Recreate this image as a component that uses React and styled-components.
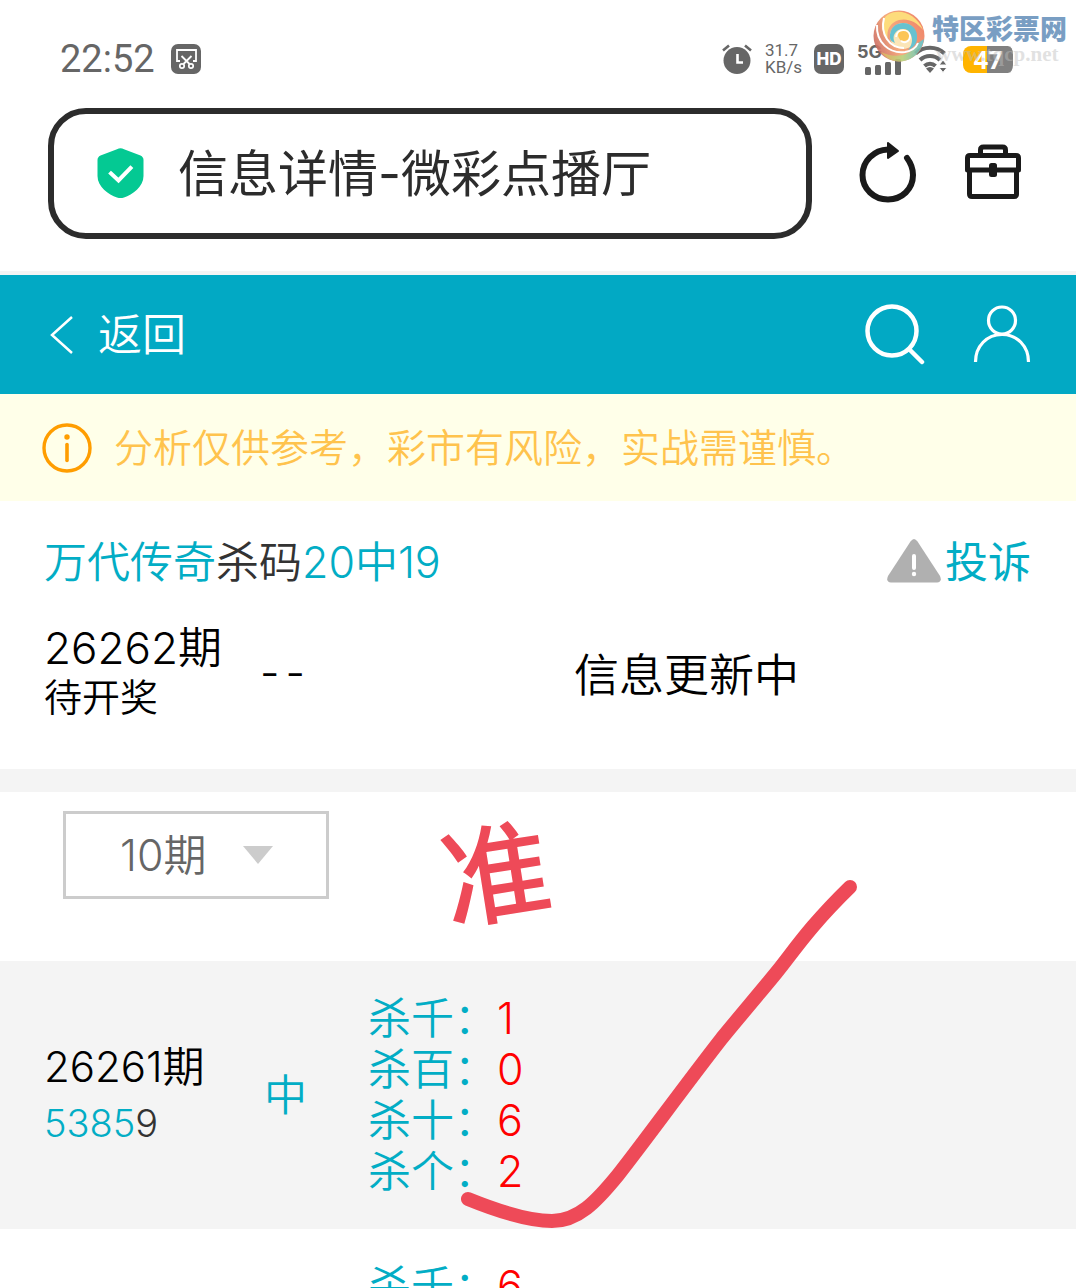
import React, { useState } from 'react';
import styled, { createGlobalStyle } from 'styled-components';

const history = [
  {
    issue: '26261期',
    hitCode: '5385',
    restCode: '9',
    result: '中',
    picks: [
      { label: '杀千', value: 1 },
      { label: '杀百', value: 0 },
      { label: '杀十', value: 6 },
      { label: '杀个', value: 2 },
    ],
  },
  {
    issue: '',
    hitCode: '',
    restCode: '',
    result: '',
    picks: [{ label: '杀千', value: 6 }],
  },
];

const ScissorsIcon = () => (
  <svg width="30" height="30" viewBox="0 0 30 30" fill="none">
    <rect width="30" height="30" rx="7" fill="#666" />
    <path d="M9 17H6V6h19v11h-3" stroke="#fff" strokeWidth="1.8" />
    <path d="M10.5 12l8 8M20.5 12l-8 8" stroke="#fff" strokeWidth="1.8" />
    <circle cx="11" cy="22" r="2.2" stroke="#fff" strokeWidth="1.7" />
    <circle cx="20" cy="22" r="2.2" stroke="#fff" strokeWidth="1.7" />
  </svg>
);

const AlarmIcon = () => (
  <svg width="30" height="30" viewBox="0 0 30 30" fill="none">
    <circle cx="15" cy="16.5" r="13.5" fill="#666" />
    <path d="M1 6.5l6-5M29 6.5l-6-5" stroke="#666" strokeWidth="2.6" />
    <path d="M15.5 10v8.5H21" stroke="#fff" strokeWidth="2.6" />
  </svg>
);

const SignalIcon = () => (
  <svg width="36" height="16" viewBox="0 0 36 16" fill="#666">
    <rect x="0" y="8" width="6" height="8" rx="1.5" />
    <rect x="10" y="6" width="6" height="10" rx="1.5" />
    <rect x="20" y="3" width="6" height="13" rx="1.5" />
    <rect x="30" y="0" width="6" height="16" rx="1.5" />
  </svg>
);

const WifiIcon = () => (
  <svg width="36" height="30" viewBox="0 0 36 30" fill="none">
    <g stroke="#666" strokeWidth="4">
      <path d="M1.5 9.5a21 21 0 0 1 29 0" />
      <path d="M6 16a14.5 14.5 0 0 1 20 0" />
      <path d="M10.5 22a8 8 0 0 1 11 0" />
    </g>
    <path d="M12 24.5a6 6 0 0 1 8 0L16 29z" fill="#666" />
    <path d="M25 21l4-5 4 5zM25 23.5l4 5 4-5z" fill="#666" stroke="#fff" strokeWidth="1" />
  </svg>
);

const ShieldIcon = () => (
  <svg width="47" height="52" viewBox="0 0 47 52" fill="none">
    <path
      d="M20 1.200Q23.500-.500 27 1.200L43.500 7.500Q46.500 9 46.500 12v16c0 11-11 18.500-19.500 21.500q-3.500 1-7 0C11.500 46.500.500 39 .500 28V12q0-3 3-4.500z"
      fill="#04c993"
    />
    <path d="M14 25.5l7.500 7L33.500 20" stroke="#fff" strokeWidth="4" strokeLinecap="square" />
  </svg>
);

const RefreshIcon = () => (
  <svg width="58" height="66" viewBox="0 0 58 66" fill="none">
    <path d="M29 8.5C15 9 3.5 20 3.5 34S15 58.5 29 58.500 54 48 54 34c0-7-3-13-6-17" stroke="#1a1a1a" strokeWidth="6" strokeLinecap="round" />
    <path d="M29 2l10 8-10 7z" fill="#1a1a1a" stroke="#1a1a1a" strokeWidth="2" strokeLinejoin="round" />
  </svg>
);

const ToolboxIcon = () => (
  <svg width="58" height="59" viewBox="0 0 58 59" fill="none" stroke="#1a1a1a" strokeWidth="5">
    <path d="M16.5 11V6q0-3 3-3h19q3 0 3 3v5" />
    <path d="M3.5 26V14q0-2.500 2.500-2.500h46q2.500 0 2.500 2.500v12z" strokeLinejoin="round" />
    <path d="M5.5 26v24q0 2.500 2.500 2.500h42q2.500 0 2.500-2.500V26" />
    <rect x="25" y="19" width="8" height="14" rx="2.5" fill="#1a1a1a" stroke="none" />
  </svg>
);

const BackIcon = () => (
  <svg width="24" height="38" viewBox="0 0 24 38" fill="none">
    <path d="M22 1L2 19l20 18" stroke="#fff" strokeWidth="2.5" />
  </svg>
);

const SearchIcon = () => (
  <svg width="60" height="64" viewBox="0 0 60 64" fill="none" stroke="#fff" strokeWidth="4.5">
    <circle cx="27" cy="28" r="24.5" />
    <path d="M44.5 46.5L57 59" strokeLinecap="round" />
  </svg>
);

const UserIcon = () => (
  <svg width="58" height="60" viewBox="0 0 58 60" fill="none" stroke="#fff" strokeWidth="3.2">
    <circle cx="29" cy="15.5" r="13.5" />
    <path d="M2.5 57C2.5 41 14 29.5 29 29.5S55.5 41 55.5 57" />
  </svg>
);

const InfoIcon = () => (
  <svg width="50" height="50" viewBox="0 0 50 50" fill="none">
    <circle cx="25" cy="25" r="23" stroke="#ff9d00" strokeWidth="3.4" />
    <circle cx="25" cy="14" r="2.7" fill="#ff9d00" />
    <path d="M25 21.5v16" stroke="#ff9d00" strokeWidth="3.6" strokeLinecap="round" />
  </svg>
);

const WarnIcon = () => (
  <svg width="54" height="48" viewBox="0 0 54 48">
    <path d="M23.5 3.5q3.500-5 7 0L53 38q2.500 6-3 6.500H4Q-1.500 44 1 38z" fill="#b0b0b0" />
    <path d="M27 18v12" stroke="#fff" strokeWidth="4" strokeLinecap="round" />
    <circle cx="27" cy="36" r="2.2" fill="#fff" />
  </svg>
);

const SwirlLogo = () => (
  <svg width="52" height="52" viewBox="0 0 52 52" fill="none">
    <defs>
      <linearGradient id="ball" x1="0" y1=".7" x2="1" y2=".3">
        <stop offset="0" stopColor="#c9685f" />
        <stop offset=".4" stopColor="#f4a070" />
        <stop offset="1" stopColor="#ee7b5c" />
      </linearGradient>
      <linearGradient id="tail" x1="0" y1="0" x2="1" y2="0">
        <stop offset="0" stopColor="#e0a44e" />
        <stop offset=".5" stopColor="#b9cf78" />
        <stop offset="1" stopColor="#5fb9c6" />
      </linearGradient>
    </defs>
    <circle cx="26" cy="26" r="25.5" fill="url(#ball)" />
    <path d="M16 4C28-2 44 5 50 20C43 11 34 8 26 10C16 13 13 21 15 31C7 21 7 9 16 4z" fill="#fdd96e" />
    <path d="M8 42C22 49 38 46 45 33L51 29C49 42 39 51.5 26 51.5C19 51.5 13 48 8 42z" fill="url(#tail)" />
    <circle cx="30" cy="26" r="13" fill="#fbe3b0" />
    <path d="M17 28C16 18 23 13 30 13C39 13 45 20 44 28C44 34 40 38 35 40C39 35 40 30 38 25C35 18 27 17 23 22C20 25 20 29 22 33C19 32 17 30 17 28z" fill="#57bccb" />
    <circle cx="31" cy="25" r="6" fill="#fcbf45" />
    <path d="M23 27C24 18 36 18 37 26C37 31 32 34 28 31" stroke="#fff" strokeWidth="1.8" />
    <path d="M4 15C3 32 16 44 32 42C38 41 43 38 45 33M11 8C7 24 16 38 31 38" stroke="#fff" strokeWidth="2" />
  </svg>
);

export default function App() {
  const [range, setRange] = useState('10');

  return (
    <Page>
      <GlobalStyle />
      <StatusBar>
        <Clock>22:52</Clock>
        <ScissorsIcon />
        <StatusRight>
          <AlarmIcon />
          <Speed>
            <span>31.7</span>
            <span>KB/s</span>
          </Speed>
          <HdBadge>HD</HdBadge>
          <Network>
            <span>5G</span>
            <SignalIcon />
          </Network>
          <WifiIcon />
          <Battery>47</Battery>
        </StatusRight>
        <Watermark>
          <SwirlLogo />
          <WatermarkText>
            <strong>特区彩票网</strong>
            <span>www.tqcp.net</span>
          </WatermarkText>
        </Watermark>
      </StatusBar>

      <BrowserBar>
        <AddressButton type="button">
          <ShieldIcon />
          <span>信息详情-微彩点播厅</span>
        </AddressButton>
        <IconButton type="button" aria-label="刷新"><RefreshIcon /></IconButton>
        <IconButton type="button" aria-label="工具箱"><ToolboxIcon /></IconButton>
      </BrowserBar>

      <Header>
        <BackLink href="#back">
          <BackIcon />
          返回
        </BackLink>
        <HeaderActions>
          <IconButton type="button" aria-label="搜索"><SearchIcon /></IconButton>
          <IconButton type="button" aria-label="我的"><UserIcon /></IconButton>
        </HeaderActions>
      </Header>

      <Notice>
        <InfoIcon />
        <span>分析仅供参考，彩市有风险，实战需谨慎。</span>
      </Notice>

      <Current>
        <TitleRow>
          <Title>
            万代传奇<em>杀码</em>20中19
          </Title>
          <ReportLink href="#report">
            <WarnIcon />
            投诉
          </ReportLink>
        </TitleRow>
        <CurrentIssue>
          <div>
            <IssueNumber>26262期</IssueNumber>
            <IssueState>待开奖</IssueState>
          </div>
          <Dashes><span>-</span><span>-</span></Dashes>
          <Updating>信息更新中</Updating>
        </CurrentIssue>
      </Current>

      <Records>
        <Filter>
          <SelectBox>
            <select aria-label="期数" value={range} onChange={(e) => setRange(e.target.value)}>
              <option value="10">10期</option>
              <option value="20">20期</option>
              <option value="30">30期</option>
            </select>
            <svg width="30" height="18" viewBox="0 0 30 18">
              <path d="M0 0h30L15 18z" fill="#ccc" />
            </svg>
          </SelectBox>
        </Filter>
        <Table>
          <tbody>
            {history.map((row, index) => (
              <Row key={index} $shaded={index % 2 === 0}>
                <IssueCell>
                  {row.issue}
                  <Code>{row.hitCode}<b>{row.restCode}</b></Code>
                </IssueCell>
                <ResultCell>{row.result}</ResultCell>
                <PicksCell>
                  {row.picks.map((pick) => (
                    <Pick key={pick.label}>{pick.label}：<b>{pick.value}</b></Pick>
                  ))}
                </PicksCell>
              </Row>
            ))}
          </tbody>
        </Table>
        <Stamp>准</Stamp>
        <TickMark width="400" height="354" viewBox="0 0 400 354" fill="none">
          <path
            d="M8 319C40 332 70 341 92 341C118 341 136 322 158 295C190 254 220 212 262 158C280 136 298 115 316 93C334 71 348 48 390 7"
            stroke="#ee4a58"
            strokeWidth="14"
            strokeLinecap="round"
          />
        </TickMark>
      </Records>
    </Page>
  );
}

const GlobalStyle = createGlobalStyle`
  * {
    box-sizing: border-box;
  }
  body {
    margin: 0;
    background: #fff;
    font-family: Inter, 'Noto Sans CJK SC', sans-serif;
    font-weight: 350;
  }
  svg {
    display: block;
    flex-shrink: 0;
  }
`;

const Page = styled.div`
  height: 100vh;
  overflow: hidden;
  color: #000;
`;

const StatusBar = styled.div`
  position: relative;
  display: flex;
  align-items: center;
  gap: 16px;
  height: 108px;
  padding: 10px 60px 0;
  color: #666;
`;

const Clock = styled.span`
  font-family: Roboto, sans-serif;
  font-size: 38px;
  font-weight: 400;
  line-height: 40px;
`;

const StatusRight = styled.div`
  display: flex;
  align-items: center;
  gap: 13px;
  margin-left: auto;
`;

const Speed = styled.div`
  display: flex;
  flex-direction: column;
  width: 36px;
  font-family: Roboto, sans-serif;
  font-size: 17px;
  font-weight: 400;
  line-height: 17px;
`;

const HdBadge = styled.span`
  width: 30px;
  border-radius: 7px;
  background: #666;
  color: #fff;
  font-size: 17px;
  font-weight: 800;
  line-height: 30px;
  text-align: center;
`;

const Network = styled.div`
  display: flex;
  flex-direction: column;
  font-size: 18px;
  font-weight: 700;
  line-height: 15px;

  svg {
    margin-left: 8px;
  }
`;

const Battery = styled.span`
  width: 53px;
  border-right: 3px solid #fff;
  border-radius: 8px;
  background: linear-gradient(90deg, #ffb400 48%, #808080 48%);
  color: #fff;
  font-family: 'Open Sans', sans-serif;
  font-size: 25px;
  font-weight: 700;
  line-height: 27px;
  text-align: center;
`;

const Watermark = styled.div`
  position: absolute;
  top: 10px;
  right: 9px;
  display: flex;
  gap: 7px;
  opacity: 0.9;
`;

const WatermarkText = styled.div`
  display: flex;
  flex-direction: column;

  strong {
    color: #6b94bd;
    font-size: 27px;
    font-weight: 900;
    line-height: 40px;
  }
  span {
    padding-left: 4px;
    color: rgba(190, 190, 190, 0.5);
    font-family: 'Liberation Serif', serif;
    font-size: 21px;
    font-weight: 700;
    line-height: 8px;
  }
`;

const BrowserBar = styled.div`
  display: flex;
  align-items: center;
  gap: 47px;
  padding: 0 54px 32px 48px;
  border-bottom: 4px solid #f4f4f4;
`;

const AddressButton = styled.button`
  flex: 1;
  display: flex;
  align-items: center;
  gap: 34px;
  height: 131px;
  padding: 0 43px;
  border: 6px solid #2c2c2c;
  border-radius: 38px;
  background: #fff;
  color: #2c2c2c;
  font-family: inherit;
  font-size: 50px;
  font-weight: 400;
  line-height: 60px;
`;

const IconButton = styled.button`
  padding: 0;
  border: 0;
  background: none;
`;

const Header = styled.header`
  display: flex;
  align-items: center;
  justify-content: space-between;
  height: 119px;
  padding: 0 45px 0 50px;
  background: #02a9c4;
`;

const BackLink = styled.a`
  display: flex;
  align-items: center;
  gap: 24px;
  color: #fff;
  font-size: 44px;
  line-height: 50px;
  text-decoration: none;
`;

const HeaderActions = styled.div`
  display: flex;
  align-items: center;
  gap: 48px;
`;

const Notice = styled.div`
  display: flex;
  align-items: center;
  gap: 22px;
  height: 107px;
  padding: 0 42px;
  background: #ffffe9;
  color: #ffc34d;
  font-size: 39px;
  line-height: 50px;
  white-space: nowrap;
`;

const Current = styled.section`
  padding: 36px 45px 48px 44px;
  border-bottom: 23px solid #f4f4f4;
`;

const TitleRow = styled.div`
  display: flex;
  align-items: center;
  justify-content: space-between;
  margin-bottom: 36px;
  font-size: 43px;
  line-height: 50px;
`;

const Title = styled.h1`
  margin: 0;
  color: #02adc5;
  font-size: 43px;
  font-weight: inherit;

  em {
    color: #333;
    font-style: normal;
  }
`;

const ReportLink = styled.a`
  display: flex;
  align-items: center;
  gap: 4px;
  color: #02adc5;
  font-weight: 400;
  text-decoration: none;
`;

const CurrentIssue = styled.div`
  display: grid;
  grid-template-columns: 216px 314px 1fr;
  align-items: center;
`;

const IssueNumber = styled.div`
  font-size: 44px;
  line-height: 50px;
`;

const IssueState = styled.div`
  font-size: 38px;
  line-height: 48px;
`;

const Dashes = styled.div`
  display: flex;
  gap: 6px;
  font-size: 43px;
  line-height: 50px;
`;

const Updating = styled.div`
  padding-top: 8px;
  font-size: 45px;
  line-height: 50px;
`;

const Records = styled.section`
  position: relative;
`;

const Filter = styled.div`
  height: 169px;
  padding: 19px 63px;
`;

const SelectBox = styled.div`
  position: relative;
  width: 266px;

  select {
    width: 100%;
    height: 88px;
    padding: 0 54px;
    border: 3px solid #ccc;
    border-radius: 0;
    appearance: none;
    background: #fff;
    color: #666;
    font-family: inherit;
    font-size: 43px;
    font-weight: inherit;
  }
  svg {
    position: absolute;
    top: 35px;
    right: 56px;
    pointer-events: none;
  }
`;

const Table = styled.table`
  width: 100%;
  border-collapse: collapse;
  table-layout: fixed;
`;

const Row = styled.tr`
  background: ${(props) => (props.$shaded ? '#f4f4f4' : '#fff')};
`;

const Cell = styled.td`
  padding: 32px 0;
  font-size: 43px;
  line-height: 51px;
`;

const IssueCell = styled(Cell)`
  width: 264px;
  padding-left: 44px;
  font-size: 42px;
  line-height: 56px;
`;

const Code = styled.div`
  color: #02adc5;
  font-size: 38px;

  b {
    color: #333;
    font-weight: inherit;
  }
`;

const ResultCell = styled(Cell)`
  width: 104px;
  color: #02adc5;
`;

const PicksCell = styled(Cell)`
  color: #02adc5;
`;

const Pick = styled.div`
  b {
    color: #f00;
    font-weight: inherit;
  }
`;

const Stamp = styled.span`
  position: absolute;
  top: 23px;
  left: 442px;
  color: #ee4a58;
  font-size: 108px;
  font-weight: 500;
  line-height: 120px;
  transform: rotate(-9deg);
`;

const TickMark = styled.svg`
  position: absolute;
  top: 88px;
  left: 460px;
`;
